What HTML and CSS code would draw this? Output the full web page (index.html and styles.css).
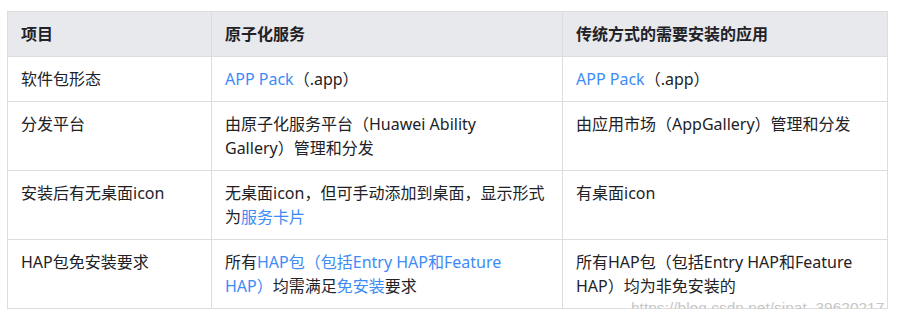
FILE: index.html
```html
<!DOCTYPE html>
<html lang="zh">
<head>
<meta charset="utf-8">
<link rel="stylesheet" href="styles.css">
</head>
<body>
<div class="wrap">
<table class="cmp">
  <colgroup>
    <col class="c1"><col class="c2"><col class="c3">
  </colgroup>
  <thead>
    <tr><th>项目</th><th>原子化服务</th><th>传统方式的需要安装的应用</th></tr>
  </thead>
  <tbody>
    <tr>
      <td>软件包形态</td>
      <td><span class="link">APP Pack</span>（.app）</td>
      <td><span class="link">APP Pack</span>（.app）</td>
    </tr>
    <tr>
      <td>分发平台</td>
      <td>由原子化服务平台（Huawei Ability<br>Gallery）管理和分发</td>
      <td>由应用市场（AppGallery）管理和分发</td>
    </tr>
    <tr>
      <td>安装后有无桌面icon</td>
      <td>无桌面icon，但可手动添加到桌面，显示形式<br>为<span class="link">服务卡片</span></td>
      <td>有桌面icon</td>
    </tr>
    <tr>
      <td>HAP包免安装要求</td>
      <td>所有<span class="link">HAP包（包括Entry HAP和Feature<br>HAP）</span>均需满足<span class="link">免安装</span>要求</td>
      <td>所有HAP包（包括Entry HAP和Feature<br>HAP）均为非免安装的</td>
    </tr>
  </tbody>
</table>
<div class="wm">https://blog.csdn.net/sinat_39620217</div>
</div>
</body>
</html>
```

FILE: styles.css
```css
html, body {
  margin: 0;
  padding: 0;
  background: #fff;
}
.wrap {
  position: relative;
  padding: 11px 0 0 7px;
}
.cmp {
  border-collapse: collapse;
  width: 880px;
  table-layout: fixed;
  font-family: "Noto Sans", "Noto Sans CJK SC", sans-serif;
  font-size: 16px;
  line-height: 24px;
  color: #222226;
}
.c1 { width: 204px; }
.c2 { width: 351px; }
.c3 { width: 325px; }
.cmp th, .cmp td {
  border: 1px solid #dddddd;
  padding: 10px 13px;
  text-align: left;
  vertical-align: top;
  white-space: nowrap;
}
.cmp th {
  background: #e8e9ec;
  font-weight: bold;
}
.link { color: #3d8bf7; }
.wm {
  position: absolute;
  left: 631px;
  top: 297px;
  font-family: "Liberation Sans", Arial, sans-serif;
  font-size: 15.5px;
  line-height: 22px;
  color: #c6c6c6;
  text-shadow: 0 0 1px #fff, 0 0 1px #fff;
}
```
